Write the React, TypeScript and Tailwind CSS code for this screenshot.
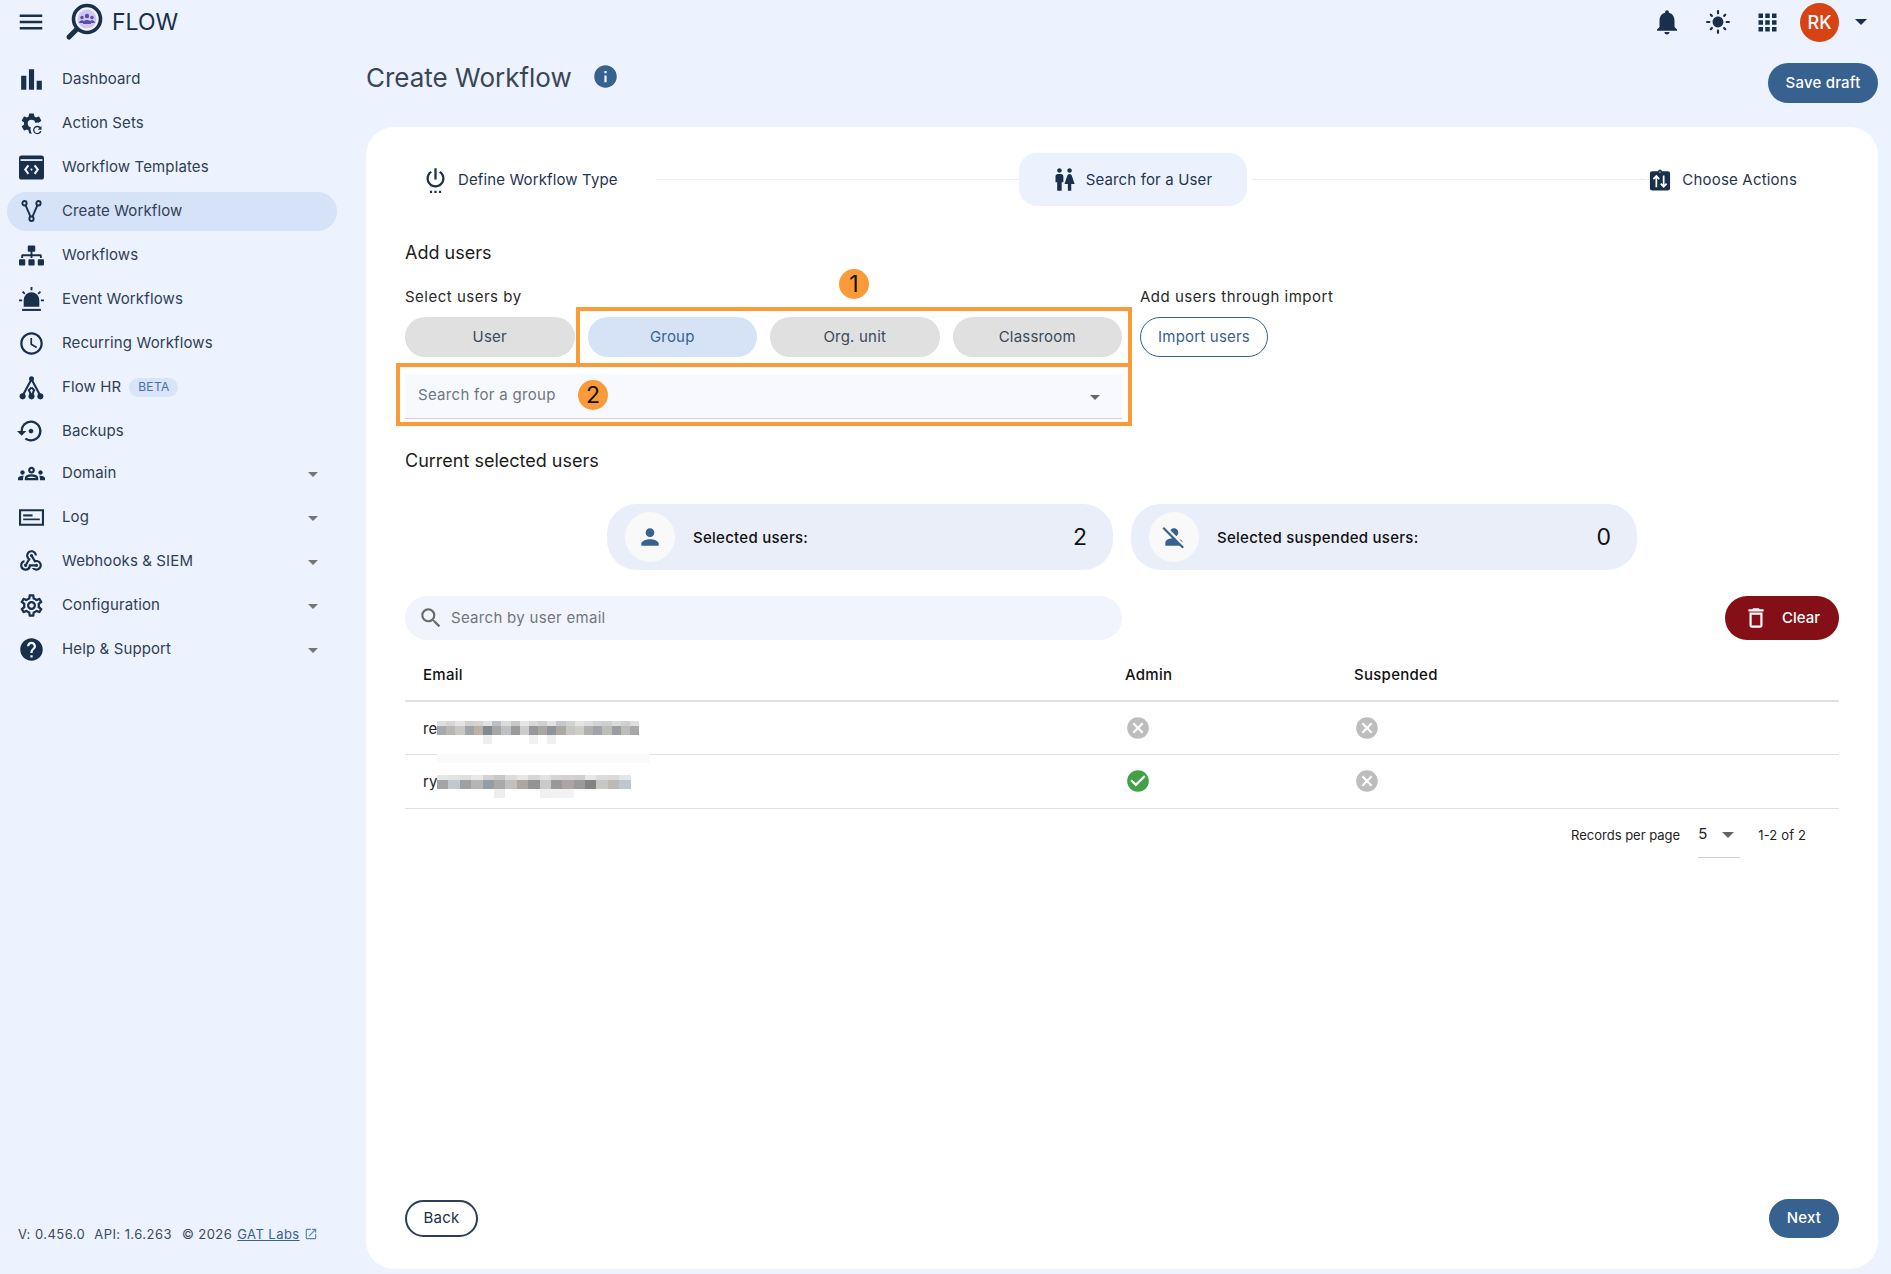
import {
  MdBarChart,
  MdAccessTime,
  MdSettingsBackupRestore,
  MdOutlineGroups,
  MdWebhook,
  MdOutlineSettings,
  MdHelp,
  MdNotifications,
  MdLightMode,
  MdApps,
  MdInfo,
  MdSettingsPower,
  MdWc,
  MdPerson,
  MdPersonOff,
  MdSearch,
  MdDeleteOutline,
  MdCancel,
  MdCheckCircle,
  MdOpenInNew,
  MdMenu,
} from "react-icons/md";
import { FaSitemap } from "react-icons/fa";
import type { ReactNode } from "react";

interface NavItem {
  label: string;
  icon: ReactNode;
  active?: boolean;
  expand?: boolean;
  badge?: string;
  tight?: boolean;
}

const ActionSetsIcon = () => (
  <svg viewBox="0 0 24 24" className="w-[25px] h-[25px]" fill="currentColor">
    <path d="M19.14 12.94c.04-.3.06-.61.06-.94 0-.32-.02-.64-.07-.94l2.03-1.58a.49.49 0 0 0 .12-.61l-1.92-3.32a.488.488 0 0 0-.59-.22l-2.39.96c-.5-.38-1.03-.7-1.62-.94l-.36-2.54a.484.484 0 0 0-.48-.41h-3.84c-.24 0-.43.17-.47.41l-.36 2.54c-.59.24-1.13.57-1.62.94l-2.39-.96c-.22-.08-.47 0-.59.22L2.74 8.87c-.12.21-.08.47.12.61l2.03 1.58c-.05.3-.09.63-.09.94s.02.64.07.94l-2.03 1.58a.49.49 0 0 0-.12.61l1.92 3.32c.12.22.37.29.59.22l2.39-.96c.5.38 1.03.7 1.62.94l.36 2.54c.05.24.24.41.48.41h3.84c.24 0 .44-.17.47-.41l.36-2.54c.59-.24 1.13-.56 1.62-.94l2.39.96c.22.08.47 0 .59-.22l1.92-3.32c.12-.22.07-.47-.12-.61l-2.01-1.58zM12 15.6A3.6 3.6 0 1 1 12 8.4a3.6 3.6 0 0 1 0 7.2z" />
    <circle cx="17.5" cy="17.5" r="6.5" fill="#ecf2fe" />
    <path d="M20.6 15.4a4.1 4.1 0 1 0 1 3.9h-1.4a2.8 2.8 0 1 1-.6-2.9l-1.7 1.7h3.7v-3.7z" />
  </svg>
);

const TemplatesIcon = () => (
  <svg viewBox="0 0 24 24" className="w-[25px] h-[25px]">
    <rect x="0" y="0.5" width="24" height="23" rx="2.5" fill="currentColor" />
    <rect x="1.5" y="4" width="21" height="1.7" fill="#ecf2fe" />
    <path d="M9 10l-3 4 3 4M15 10l3 4-3 4" fill="none" stroke="#ecf2fe" strokeWidth="2" />
    <circle cx="12" cy="14" r="1" fill="#ecf2fe" />
  </svg>
);

const ForkIcon = () => (
  <svg viewBox="0 0 24 24" className="w-[21px] h-[22px]" fill="none" stroke="currentColor" strokeWidth="2.2" preserveAspectRatio="none">
    <circle cx="4" cy="3.5" r="2.4" />
    <circle cx="20" cy="3.5" r="2.4" />
    <circle cx="12" cy="20.5" r="2.4" />
    <path d="M5.2 5.6l5.8 12.8M18.8 5.6l-5.8 12.8" />
  </svg>
);

const SirenIcon = () => (
  <svg viewBox="0 0 24 24" className="w-[25px] h-[25px]" fill="currentColor">
    <path d="M4.5 19v-6.5a7.5 7.5 0 0 1 15 0V19z" />
    <rect x="3" y="21" width="18" height="2" />
    <rect x="11.1" y="0" width="1.8" height="3.2" />
    <rect x="0" y="12" width="3" height="1.7" />
    <rect x="21" y="12" width="3" height="1.7" />
    <path d="M2.8 5l1.2-1.2 2.2 2.2-1.2 1.2zM21.2 5L20 3.8 17.8 6 19 7.2z" />
  </svg>
);

const HrIcon = () => (
  <svg viewBox="0 0 24 24" className="w-[25px] h-[25px]" fill="currentColor" stroke="currentColor">
    <circle cx="12" cy="3.5" r="2.4" stroke="none" />
    <circle cx="3.5" cy="20.5" r="2.9" stroke="none" />
    <circle cx="12" cy="20.5" r="2.9" stroke="none" />
    <circle cx="20.5" cy="20.5" r="2.9" stroke="none" />
    <path d="M12 4L3.5 20M12 4l8.5 16M12 12l-2.5 2.5L12 20M12 12l2.5 2.5L12 20" fill="none" strokeWidth="2" />
  </svg>
);

const LogIcon = () => (
  <svg viewBox="0 0 24 16" className="w-[25px] h-[17px]" fill="currentColor">
    <path d="M0 0h24v16H0zM2 2v12h20V2z" fillRule="evenodd" />
    <rect x="4" y="5" width="9" height="2" />
    <rect x="4" y="9" width="16" height="1.6" />
  </svg>
);

const ChooseActionsIcon = () => (
  <svg viewBox="0 0 24 24" className="w-[22px] h-[24px]">
    <rect x="1" y="2.5" width="22" height="21" rx="2.5" fill="currentColor" />
    <circle cx="12" cy="2.5" r="2" fill="currentColor" />
    <circle cx="12" cy="3.4" r="0.8" fill="#fff" />
    <path d="M8 20V8M4.8 11L8 7.6l3.2 3.4M16 7v12M12.8 16l3.2 3.4 3.2-3.4" fill="none" stroke="#fff" strokeWidth="1.9" />
  </svg>
);

const Logo = () => (
  <svg viewBox="0 0 38 38" className="w-[38px] h-[38px]">
    <path d="M12 26L4 34" stroke="#1a2f4b" strokeWidth="5" strokeLinecap="round" />
    <circle cx="22" cy="16" r="13.5" fill="#f3f1fb" stroke="#1a2f4b" strokeWidth="3.6" />
    <circle cx="22" cy="16" r="9.5" fill="#cfc8ee" />
    <circle cx="22" cy="13" r="2.2" fill="#5b4bb0" />
    <circle cx="17" cy="14.5" r="1.7" fill="#5b4bb0" />
    <circle cx="27" cy="14.5" r="1.7" fill="#5b4bb0" />
    <path d="M18 21a4 4 0 0 1 8 0zM14 20a3 3 0 0 1 5-2l-1 2zM30 20a3 3 0 0 0-5-2l1 2z" fill="#5b4bb0" />
  </svg>
);

const Caret = ({ className }: { className: string }) => (
  <span
    className={`w-0 h-0 border-x-[5px] border-x-transparent border-t-[5px] ${className}`}
  ></span>
);

const BigCaret = ({ className }: { className: string }) => (
  <span
    className={`w-0 h-0 border-x-[6px] border-x-transparent border-t-[6px] ${className}`}
  ></span>
);

const navItems: NavItem[] = [
  { label: "Dashboard", icon: <MdBarChart className="w-[31px] h-[31px]" /> },
  { label: "Action Sets", icon: <ActionSetsIcon /> },
  { label: "Workflow Templates", icon: <TemplatesIcon /> },
  { label: "Create Workflow", icon: <ForkIcon />, active: true },
  { label: "Workflows", icon: <FaSitemap className="w-[25px] h-[25px]" /> },
  { label: "Event Workflows", icon: <SirenIcon /> },
  { label: "Recurring Workflows", icon: <MdAccessTime className="w-[27px] h-[27px]" /> },
  { label: "Flow HR", icon: <HrIcon />, badge: "BETA" },
  { label: "Backups", icon: <MdSettingsBackupRestore className="w-[28px] h-[28px]" /> },
  { label: "Domain", icon: <MdOutlineGroups className="w-[27px] h-[27px]" />, expand: true, tight: true },
  { label: "Log", icon: <LogIcon />, expand: true },
  { label: "Webhooks & SIEM", icon: <MdWebhook className="w-[26px] h-[26px]" />, expand: true },
  { label: "Configuration", icon: <MdOutlineSettings className="w-[27px] h-[27px]" />, expand: true },
  { label: "Help & Support", icon: <MdHelp className="w-[27px] h-[27px]" />, expand: true },
];

const blurRows = [
  {
    top: ["#dedede", "#d6d6d6", "#e4e4e4", "#d0d0d0", "#d4d4d4", "#e2e2e2", "#bcc0c6", "#dcdcdc", "#c8c8cc", "#e6e6e6", "#d8d8d8", "#d0d0d0", "#e2e2e2", "#c4c8ce", "#d2d2d2", "#e4e4e4", "#dcdcdc", "#d2d2d2", "#cecece", "#dadada", "#d0d0d0", "#dedede"],
    main: ["#a6aaae", "#b8b7b3", "#c8c7c3", "#a0a4a6", "#bab2a8", "#828991", "#a8a6a4", "#bec1c2", "#9a9a9a", "#cccccc", "#98989c", "#aaa6a2", "#90949a", "#aca8a2", "#c5c5c2", "#cecec9", "#b0b0b0", "#a0a4a8", "#bcbcb8", "#9a9ea2", "#bebcb8", "#a8a8a8"],
    low: ["#ffffff", "#ffffff", "#ffffff", "#ffffff", "#ffffff", "#eeeeee", "#ffffff", "#ffffff", "#ffffff", "#ffffff", "#f1f1f1", "#ffffff", "#efefef", "#ffffff", "#ffffff", "#ffffff", "#ffffff", "#ffffff", "#ffffff", "#ffffff", "#ffffff", "#ffffff"],
  },
  {
    top: ["#e6e6e6", "#e2e2e2", "#dedede", "#e8e8e8", "#d2d2d2", "#c8c8c8", "#dcdcdc", "#e6e6e6", "#d6d6d6", "#e2e2e2", "#d4d4d4", "#d2d2d2", "#cfcfcf", "#e8e8e8", "#dcdcdc", "#dadada", "#e5e5e5"],
    main: ["#a4a4a4", "#c2c8ce", "#a0a0a0", "#b8b4b2", "#949da5", "#aaaaa8", "#c0c0be", "#aca6a2", "#949494", "#cacaca", "#99999d", "#aaa6a4", "#9d9999", "#848485", "#c7c7c3", "#bcbab2", "#c0c6ce"],
    low: ["#ffffff", "#ffffff", "#ffffff", "#ffffff", "#ffffff", "#eeeeee", "#ffffff", "#ffffff", "#ffffff", "#f0f0f0", "#f2f2f2", "#f2f2f2", "#ffffff", "#ffffff", "#ffffff", "#ffffff", "#ffffff"],
  },
];

const users = [
  { prefix: "re", blur: 0, admin: false, suspended: false },
  { prefix: "ry", blur: 1, admin: true, suspended: false },
];

const choiceButtons = [
  { label: "User", active: false },
  { label: "Group", active: true },
  { label: "Org. unit", active: false },
  { label: "Classroom", active: false },
];

function BlurredEmail({ index }: { index: number }) {
  const row = blurRows[index];
  const width = index === 0 ? "w-[9.2px]" : "w-[11.4px]";
  return (
    <div className="flex flex-col mt-[9px]">
      <div className="flex h-[5px]">
        {row.top.map((c, i) => (
          <span key={i} className={`${width} h-full`} style={{ backgroundColor: c }}></span>
        ))}
      </div>
      <div className="flex h-[9px]">
        {row.main.map((c, i) => (
          <span key={i} className={`${width} h-full`} style={{ backgroundColor: c }}></span>
        ))}
      </div>
      <div className="flex h-[9px]">
        {row.low.map((c, i) => (
          <span key={i} className={`${width} h-full`} style={{ backgroundColor: c }}></span>
        ))}
      </div>
    </div>
  );
}

function Sidebar() {
  return (
    <aside className="w-[366px] shrink-0 flex flex-col pt-[13px] pb-[30px] text-[#2f3f55]">
      {navItems.map((item) => (
        <div
          key={item.label}
          className={`ml-[7px] w-[330px] my-[2.5px] flex items-center rounded-full pl-[5px] pr-[19px] h-[39px] ${
            item.active ? "bg-[#d6e2f8]" : ""
          } ${item.tight ? "mt-[0.5px]" : ""}`}
        >
          <span className="w-[38px] flex justify-center text-[#1a2f4b]">{item.icon}</span>
          <span className="ml-[12px] text-[15px] tracking-[0.12px]">{item.label}</span>
          {item.badge && (
            <span className="ml-[8px] h-[19px] w-[49px] rounded-full bg-[#d9e4f8] text-[#45709f] text-[12px] tracking-[0.3px] flex items-center justify-center">
              {item.badge}
            </span>
          )}
          {item.expand && <Caret className="ml-auto mt-[3px] border-t-[#757575]" />}
        </div>
      ))}
      <div className="mt-auto pl-[18px] text-[13px] tracking-[0.45px] text-[#3d4a5c] flex items-center whitespace-nowrap">
        <span>V: 0.456.0</span>
        <span className="ml-[9px]">API: 1.6.263</span>
        <span className="ml-[10px]">© 2026</span>
        <span className="ml-[5px] underline text-[#37618e]">GAT Labs</span>
        <MdOpenInNew className="ml-[4px] w-[14px] h-[14px] text-[#5f84ad]" />
      </div>
    </aside>
  );
}

function Stepper() {
  return (
    <div className="flex items-center h-[53px] mt-[26px] pl-[17px]">
      <div className="flex items-center text-[#1f3550]">
        <MdSettingsPower className="w-[27px] h-[27px] text-[#1a2f4b]" />
        <span className="ml-[9px] text-[15px] tracking-[0.12px] mt-[1px]">Define Workflow Type</span>
      </div>
      <div className="w-[363px] shrink-0 h-[1.5px] bg-[#ececec] ml-[38px]"></div>
      <div className="w-[228px] h-[53px] rounded-[18px] bg-[#ecf2fd] flex items-center pl-[32px] text-[#1f3550]">
        <MdWc className="w-[27px] h-[27px] text-[#1a2f4b]" />
        <span className="ml-[8px] text-[15px] tracking-[0.15px] mt-[1px]">Search for a User</span>
      </div>
      <div className="flex-1 h-[1.5px] bg-[#ececec] ml-[5px]"></div>
      <div className="flex items-center text-[#1f3550] pl-[3px] pr-[42px]">
        <span className="text-[#1a2f4b]">
          <ChooseActionsIcon />
        </span>
        <span className="ml-[11px] text-[15px] tracking-[0.2px] mt-[1px]">Choose Actions</span>
      </div>
    </div>
  );
}

function StatCard({ icon, label, value }: { icon: ReactNode; label: string; value: number }) {
  return (
    <div className="w-[506px] h-[66px] rounded-[30px] bg-[#eaeef9] flex items-center pl-[18px] pr-[26px]">
      <span className="w-[50px] h-[50px] rounded-full bg-[#f9f9f9] flex items-center justify-center text-[#37618e]">
        {icon}
      </span>
      <span className="ml-[18px] mt-[2px] text-[15px] font-medium tracking-[0.27px] text-[#111]">{label}</span>
      <span className="ml-auto text-[23px] text-[#111]">{value}</span>
    </div>
  );
}

export default function App() {
  return (
    <div
      className="w-[1891px] h-[1274px] bg-[#ecf2fe] flex flex-col overflow-hidden"
      style={{ fontFamily: "Inter, 'Liberation Sans', sans-serif" }}
    >
      <header className="h-[44px] shrink-0 flex items-center pl-[16px] pr-[24px] text-[#1a2f4b]">
        <MdMenu className="w-[30px] h-[30px]" />
        <span className="ml-[19px]">
          <Logo />
        </span>
        <span className="ml-[9px] text-[23px] text-[#1a2f4b]">FLOW</span>
        <MdNotifications className="ml-auto w-[30px] h-[30px]" />
        <MdLightMode className="ml-[23px] w-[26px] h-[26px]" />
        <MdApps className="ml-[23px] w-[27px] h-[27px]" />
        <span className="ml-[19px] w-[39px] h-[39px] rounded-full bg-[#d84315] text-white text-[18px] font-medium flex items-center justify-center">
          RK
        </span>
        <BigCaret className="ml-[16px] border-t-[#1a2f4b]" />
      </header>

      <div className="flex-1 flex min-h-0">
        <Sidebar />
        <main className="flex-1 flex flex-col pr-[13px] pb-[5px] min-w-0">
          <div className="h-[83px] shrink-0 flex items-start">
            <h1 className="mt-[17px] text-[26px] leading-[34px] text-[#3a4654]">Create Workflow</h1>
            <MdInfo className="ml-[20px] mt-[19px] w-[27px] h-[27px] text-[#37618e]" />
            <button className="ml-auto mt-[19px] w-[110px] h-[40px] rounded-full bg-[#37618e] text-white text-[15px] font-medium tracking-[0.2px]">
              Save draft
            </button>
          </div>

          <section className="relative flex-1 bg-white rounded-[28px] px-[39px] pb-[31px] flex flex-col min-h-0">
            <Stepper />

            <h2 className="mt-[35px] h-[24px] leading-[24px] text-[18px] text-[#1c1c1c]">Add users</h2>

            <div className="mt-[22px] flex">
              <div className="w-[735px]">
                <div className="h-[20px] leading-[20px] text-[15px] tracking-[0.5px] text-[#2a2a2a]">Select users by</div>
                <div className="mt-[10px] flex gap-[13px]">
                  {choiceButtons.map((b) => (
                    <button
                      key={b.label}
                      className={`w-[169.5px] h-[40px] rounded-full text-[15px] tracking-[0.2px] ${
                        b.active ? "bg-[#d6e3f7] text-[#37618e]" : "bg-[#e0e0e0] text-[#3a4a5a]"
                      }`}
                    >
                      {b.label}
                    </button>
                  ))}
                </div>
              </div>
              <div>
                <div className="h-[20px] leading-[20px] text-[15px] tracking-[0.5px] text-[#2a2a2a]">Add users through import</div>
                <button className="mt-[10px] w-[128px] h-[40px] rounded-full border-[1.5px] border-[#37618e] text-[#37618e] text-[15px] tracking-[0.2px]">
                  Import users
                </button>
              </div>
            </div>

            <div className="mt-[17px] w-[717px] h-[45px] bg-[#f7f9fe] border-b-[1.5px] border-[#cfcfcf] flex items-center pl-[13px] pr-[22px]">
              <span className="text-[15px] tracking-[0.3px] text-[#6f7680] -mt-[1px]">Search for a group</span>
              <Caret className="ml-auto mt-[2px] border-t-[#666]" />
            </div>

            <h2 className="mt-[30px] h-[24px] leading-[24px] text-[18px] text-[#1c1c1c]">Current selected users</h2>

            <div className="mt-[31px] flex justify-center gap-[18px]">
              <StatCard icon={<MdPerson className="w-[26px] h-[26px]" />} label="Selected users:" value={2} />
              <StatCard icon={<MdPersonOff className="w-[26px] h-[26px]" />} label="Selected suspended users:" value={0} />
            </div>

            <div className="mt-[26px] flex justify-between">
              <div className="w-[717px] h-[44px] rounded-full bg-[#f1f4fc] flex items-center pl-[13px]">
                <MdSearch className="w-[26px] h-[26px] text-[#6b6b6b]" />
                <span className="ml-[7px] text-[15px] tracking-[0.3px] text-[#6f7680]">Search by user email</span>
              </div>
              <button className="w-[114px] h-[44px] rounded-full bg-[#850f17] text-white flex items-center pl-[18px]">
                <MdDeleteOutline className="w-[26px] h-[26px]" />
                <span className="ml-[13px] text-[15px] font-medium">Clear</span>
              </button>
            </div>

            <div className="grid grid-cols-[702px_229px_1fr] pl-[18px] h-[62px] items-center border-b-2 border-[#e0e0e0] text-[15px] font-medium tracking-[0.27px] text-[#111]">
              <span className="mt-[11px]">Email</span>
              <span className="mt-[11px]">Admin</span>
              <span className="mt-[11px]">Suspended</span>
            </div>
            {users.map((u) => (
              <div
                key={u.prefix}
                className={`relative grid grid-cols-[702px_229px_1fr] pl-[18px] items-center border-b border-[#e0e0e0] text-[15px] text-[#222] ${
                  u.blur === 0 ? "h-[53px]" : "h-[54px]"
                }`}
              >
                <div className="flex items-center">
                  <span className="w-[14px] mt-[2px]">{u.prefix}</span>
                  <BlurredEmail index={u.blur} />
                </div>
                <span>
                  {u.admin ? (
                    <MdCheckCircle className="w-[26px] h-[26px] text-[#43a047] -mt-[1px]" />
                  ) : (
                    <MdCancel className="w-[26px] h-[26px] text-[#bdbdbd]" />
                  )}
                </span>
                <span>
                  <MdCancel className={`w-[26px] h-[26px] text-[#bdbdbd] ${u.blur === 1 ? "-mt-[1px]" : ""}`} />
                </span>
                {u.blur === 0 && (
                  <div className="absolute left-[32px] top-[52px] w-[213px] h-[9px] bg-[#fafafa]"></div>
                )}
              </div>
            ))}

            <div className="mt-[12px] flex justify-end items-start pr-[33px] text-[13px] text-[#222]">
              <span className="leading-[28px]">Records per page</span>
              <div className="ml-[18px] w-[42px] h-[37px] border-b border-[#cfcfcf] flex items-start">
                <span className="text-[15px] leading-[26px]">5</span>
                <BigCaret className="ml-[15px] mt-[11px] border-t-[#666]" />
              </div>
              <span className="ml-[18px] leading-[28px] tracking-[0.15px]">1-2 of 2</span>
            </div>

            <div className="mt-auto flex justify-between items-center">
              <button className="w-[73px] h-[37px] rounded-full border-2 border-[#2c3f58] text-[15px] tracking-[0.2px] text-[#1a2f4b]">
                Back
              </button>
              <button className="w-[70px] h-[39px] rounded-full bg-[#37618e] text-white text-[15px] font-medium tracking-[0.2px]">
                Next
              </button>
            </div>

            {/* annotation overlays drawn on top of the form */}
            <div className="absolute left-[210px] top-[180px] w-[556px] h-[60px] border-[4px] border-[#fb9a38]"></div>
            <div className="absolute left-[30px] top-[236px] w-[736px] h-[63px] border-[4px] border-[#fb9a38]"></div>
            <div className="absolute left-[473px] top-[142px] w-[30px] h-[30px] rounded-full bg-[#fb9a38] text-[#111] text-[23px] flex items-center justify-center">
              1
            </div>
            <div className="absolute left-[212px] top-[253px] w-[30px] h-[30px] rounded-full bg-[#fb9a38] text-[#111] text-[23px] flex items-center justify-center">
              2
            </div>
          </section>
        </main>
      </div>
    </div>
  );
}
